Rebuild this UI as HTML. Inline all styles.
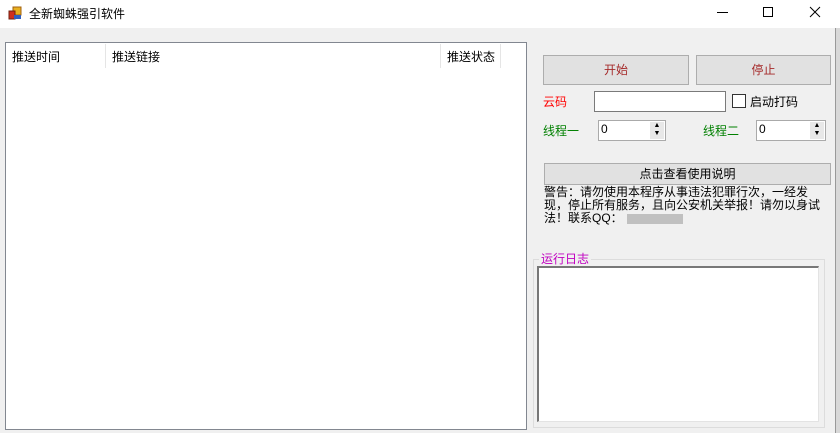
<!DOCTYPE html>
<html><head><meta charset="utf-8"><style>
*{margin:0;padding:0;box-sizing:border-box}
body{width:840px;height:433px;background:#f0f0f0;position:relative;overflow:hidden;font-family:"Liberation Sans","Noto Sans CJK SC",sans-serif;font-size:12px;color:#000}
.a{position:absolute}
.btn{position:absolute;background:#e1e1e1;border:1px solid #adadad;text-align:center;font-size:12px}
</style></head><body>
<div class="a" style="left:0;top:0;width:840px;height:28px;background:#fff"></div>
<svg class="a" style="left:8px;top:6px" width="14" height="14"><rect x="5" y="1" width="8" height="8" fill="#e8b020" stroke="#a06010"/><rect x="1" y="5" width="6" height="8" fill="#d03020" stroke="#702010"/><rect x="6" y="9" width="7" height="4" fill="#3060c0"/></svg>
<div class="a" style="left:29px;top:5px;font-size:12px">全新蜘蛛强引软件</div>
<div class="a" style="left:717px;top:12px;width:11px;height:1px;background:#000"></div>
<div class="a" style="left:763px;top:7px;width:10px;height:10px;border:1px solid #000"></div>
<svg class="a" style="left:809px;top:6px" width="12" height="12"><path d="M1 1L11 11M11 1L1 11" stroke="#000" stroke-width="1"/></svg>
<div class="a" style="left:835px;top:28px;width:5px;height:405px;background:#d8d8d8;border-left:1px solid #999"></div>
<div class="a" style="left:5px;top:42px;width:522px;height:388px;background:#fff;border:1px solid #828790"></div>
<div class="a" style="left:12px;top:48px">推送时间</div>
<div class="a" style="left:105px;top:44px;width:1px;height:24px;background:#e5e5e5"></div>
<div class="a" style="left:112px;top:48px">推送链接</div>
<div class="a" style="left:440px;top:44px;width:1px;height:24px;background:#e5e5e5"></div>
<div class="a" style="left:447px;top:48px">推送状态</div>
<div class="a" style="left:500px;top:44px;width:1px;height:24px;background:#e5e5e5"></div>
<div class="btn" style="left:543px;top:55px;width:146px;height:30px;line-height:28px;color:#a52a2a">开始</div>
<div class="btn" style="left:696px;top:55px;width:135px;height:30px;line-height:28px;color:#a52a2a">停止</div>
<div class="a" style="left:543px;top:93px;color:#f00">云码</div>
<div class="a" style="left:594px;top:91px;width:132px;height:21px;background:#fff;border:1px solid #7a7a7a"></div>
<div class="a" style="left:732px;top:94px;width:14px;height:14px;background:#fff;border:1px solid #333"></div>
<div class="a" style="left:750px;top:93px">启动打码</div>
<div class="a" style="left:543px;top:122px;color:#008000">线程一</div>
<div class="a" style="left:598px;top:120px;width:68px;height:21px;background:#fff;border:1px solid #aaa"><span style="position:absolute;left:2px;top:1px">0</span><div style="position:absolute;right:1px;top:1px;width:14px;height:17px;background:#e8e8e8;font-size:7px;line-height:8px;text-align:center">▲<br>▼</div></div>
<div class="a" style="left:703px;top:122px;color:#008000">线程二</div>
<div class="a" style="left:756px;top:120px;width:70px;height:21px;background:#fff;border:1px solid #aaa"><span style="position:absolute;left:2px;top:1px">0</span><div style="position:absolute;right:1px;top:1px;width:14px;height:17px;background:#e8e8e8;font-size:7px;line-height:8px;text-align:center">▲<br>▼</div></div>
<div class="btn" style="left:544px;top:163px;width:287px;height:22px;line-height:20px">点击查看使用说明</div>
<div class="a" style="left:544px;top:186px;width:290px;line-height:13px;white-space:nowrap">警告：请勿使用本程序从事违法犯罪行次，一经发<br>现，停止所有服务，且向公安机关举报！请勿以身试<br>法！联系QQ：<span style="display:inline-block;width:56px;height:10px;background:#c0c0c0;vertical-align:middle;margin-left:4px"></span></div>
<div class="a" style="left:533px;top:259px;width:292px;height:169px;border:1px solid #dcdcdc"></div>
<div class="a" style="left:539px;top:250px;padding:0 2px;background:#f0f0f0;color:#c000c0">运行日志</div>
<div class="a" style="left:537px;top:266px;width:282px;height:156px;background:#fff;border-top:2px solid #777;border-left:2px solid #777;border-right:1px solid #e3e3e3;border-bottom:1px solid #e3e3e3"></div>
</body></html>
